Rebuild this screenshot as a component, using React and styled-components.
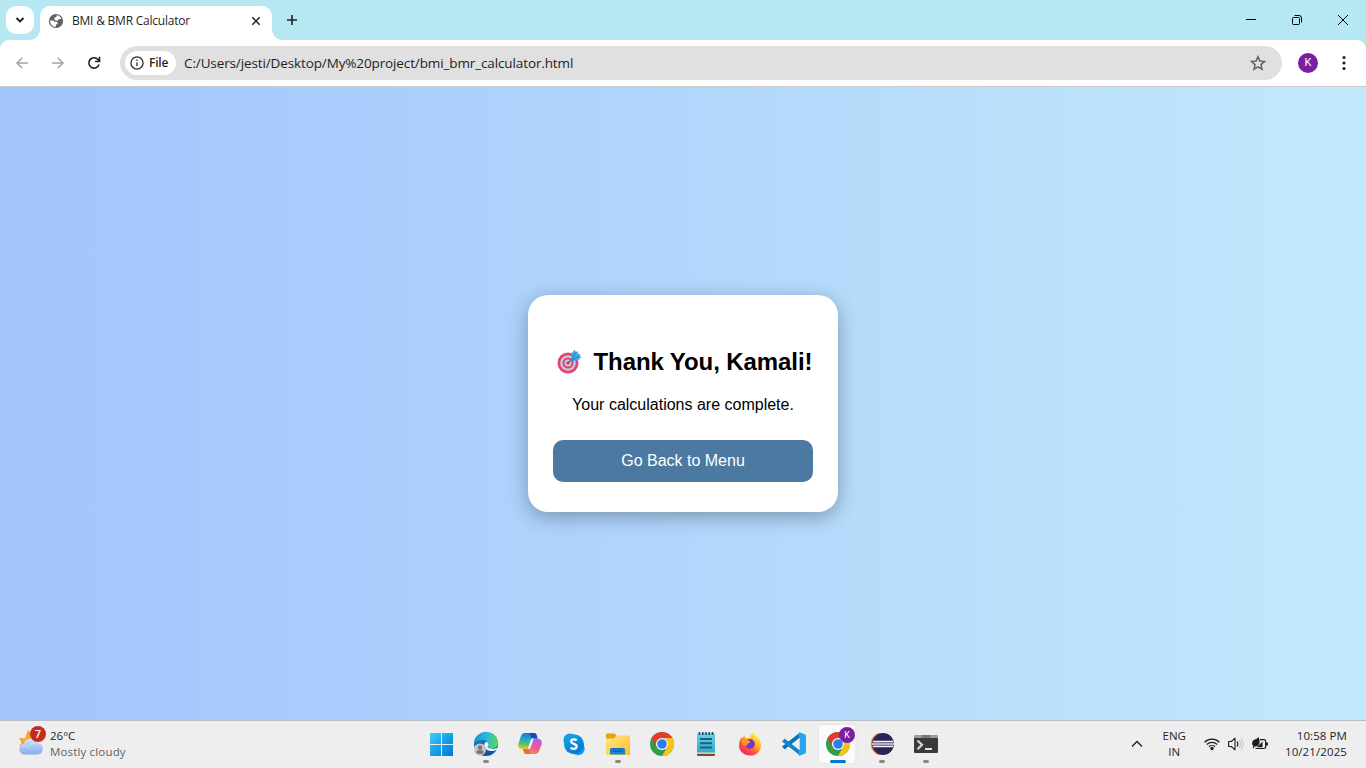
import React from "react";
import styled, { createGlobalStyle } from "styled-components";

const Global = createGlobalStyle`
  * { box-sizing: border-box; }
  body { margin: 0; overflow: hidden; }
`;

const ui = `"Open Sans", "Noto Sans", sans-serif`;

const Screen = styled.div`
  width: 1366px;
  height: 768px;
  display: flex;
  flex-direction: column;
  overflow: hidden;
  font-family: ${ui};
  color: #1f1f1f;
`;

const Text = styled.span`
  font-family: ${(p) => p.$font || ui};
  font-size: ${(p) => p.$size || 12}px;
  font-weight: ${(p) => p.$weight || 400};
  letter-spacing: ${(p) => p.$track || 0}px;
  line-height: ${(p) => p.$line || 16}px;
  color: ${(p) => p.$color || "#1f1f1f"};
  white-space: nowrap;
`;

const Svg = styled.svg`
  display: block;
  flex: none;
  overflow: visible;
`;

/* Browser chrome */
const TitleBar = styled.header`
  height: 40px;
  flex: none;
  display: flex;
  background: #b5e8f3;
`;

const TabSearch = styled.button`
  width: 28px;
  height: 28px;
  margin: 6px 6px 0;
  padding: 0;
  border: 0;
  border-radius: 10px;
  background: #fff;
  display: grid;
  place-items: center;
`;

const Tab = styled.div`
  position: relative;
  width: 232px;
  height: 34px;
  margin-top: 6px;
  padding: 0 9px 5px 8px;
  display: flex;
  align-items: center;
  background: #fff;
  border-radius: 10px 10px 0 0;
  &::before, &::after {
    content: "";
    position: absolute;
    bottom: 0;
    width: 10px;
    height: 10px;
  }
  &::before { left: -10px; background: radial-gradient(circle at 0 0, transparent 9.5px, #fff 10px); }
  &::after { right: -10px; background: radial-gradient(circle at 100% 0, transparent 9.5px, #fff 10px); }
`;

const TabTitle = styled(Text)`
  margin-left: 8px;
  flex: 1;
`;

const NewTab = styled.div`
  width: 40px;
  height: 40px;
  display: grid;
  place-items: center;
`;

const WindowButtons = styled.div`
  margin-left: auto;
  display: flex;
`;

const WindowButton = styled.div`
  width: 46px;
  height: 40px;
  display: grid;
  place-items: center;
`;

const ToolbarBack = styled.div`
  flex: none;
  height: 47px;
  background: #b5e8f3;
`;

const Toolbar = styled.div`
  height: 47px;
  display: flex;
  align-items: center;
  padding: 0 4px 1px;
  background: #fff;
  border-radius: 9px 9px 0 0;
  border-bottom: 1px solid #c9cbcd;
`;

const NavButton = styled.div`
  width: 36px;
  height: 34px;
  display: grid;
  place-items: center;
`;

const AddressBar = styled.div`
  width: 1162px;
  height: 34px;
  margin-left: 8px;
  padding: 0 15px 0 5px;
  display: flex;
  align-items: center;
  border-radius: 17px;
  background: #e0e0e0;
`;

const FileChip = styled.div`
  width: 51px;
  height: 24px;
  margin-right: 8px;
  padding-left: 5px;
  display: flex;
  align-items: center;
  gap: 5px;
  border-radius: 12px;
  background: #fff;
`;

const Url = styled(Text)`
  flex: 1;
`;

const Avatar = styled.div`
  width: ${(p) => p.$size}px;
  height: ${(p) => p.$size}px;
  border-radius: 50%;
  display: grid;
  place-items: center;
  background: #7b1fa2;
`;

const ProfileAvatar = styled(Avatar)`
  margin-left: 16px;
  margin-right: 16px;
`;

/* Page */
const Page = styled.main`
  flex: 1;
  display: flex;
  align-items: center;
  justify-content: center;
  background: linear-gradient(to right, #a1c4fd, #c2e9fb);
  font-family: "Liberation Sans", Arial, sans-serif;
`;

const Card = styled.section`
  width: 310px;
  height: 217px;
  padding: 30px 25px;
  border-radius: 20px;
  background: #fff;
  box-shadow: 0 5px 20px rgba(0, 0, 0, 0.3);
  text-align: center;
  color: #000;
`;

const Heading = styled.h2`
  height: 27px;
  margin: 23px 0 0;
  padding: 0 0 0 3.5px;
  display: flex;
  align-items: center;
  gap: 12px;
  font-size: 24px;
  line-height: 27px;
  letter-spacing: -0.09px;
  white-space: nowrap;
`;

const Message = styled.p`
  margin: 21px 0 0;
  font-size: 16px;
  line-height: 18px;
`;

const MenuButton = styled.button`
  width: 100%;
  height: 42px;
  margin-top: 26px;
  padding: 0;
  border: 0;
  border-radius: 10px;
  background: #4b79a1;
  color: #fff;
  font: 16px "Liberation Sans", Arial, sans-serif;
`;

/* Taskbar */
const Taskbar = styled.footer`
  height: 48px;
  flex: none;
  display: grid;
  grid-template-columns: 420px 528px 1fr;
  background: #eeeeee;
  border-top: 1px solid #b9bdc4;
`;

const Weather = styled.div`
  display: flex;
  align-items: center;
  padding: 0 0 2px 18px;
  gap: 4px;
`;

const WeatherIcon = styled.div`
  position: relative;
  width: 28px;
  height: 32px;
`;

const CountBadge = styled.div`
  position: absolute;
  left: 12px;
  top: -2px;
  width: 16px;
  height: 16px;
  border-radius: 50%;
  display: grid;
  place-items: center;
  background: #c42b1c;
`;

const Lines = styled.div`
  display: flex;
  flex-direction: column;
  align-items: ${(p) => p.$align || "flex-start"};
`;

const Apps = styled.nav`
  display: flex;
`;

const AppSlot = styled.div`
  position: relative;
  width: 44px;
  height: 47px;
  padding: 11px 0 0 10px;
`;

const ActivePlate = styled.div`
  position: absolute;
  left: 3px;
  top: 4px;
  width: 38px;
  height: 38px;
  border-radius: 4px;
  background: #fbfbfb;
  box-shadow: 0 0 0 1px #e6e6e6;
  border-right: 3px solid #f0f0f0;
`;

const AppArt = styled.div`
  position: relative;
  width: 24px;
  height: 24px;
`;

const Indicator = styled.div`
  position: absolute;
  left: ${(p) => (p.$active ? 14 : 19)}px;
  bottom: 5px;
  width: ${(p) => (p.$active ? 16 : 6)}px;
  height: 3px;
  border-radius: 2px;
  background: ${(p) => (p.$active ? "#0078d4" : "#8b8b8b")};
`;

const ProfileBadge = styled(Avatar)`
  position: absolute;
  left: 23px;
  top: 6px;
`;

const Tray = styled.div`
  display: flex;
  align-items: center;
  justify-content: flex-end;
  padding: 0 19px 2px 0;
`;

const Language = styled(Lines)`
  margin-left: 20px;
`;

const TrayIcons = styled.div`
  display: flex;
  align-items: center;
  gap: 8px;
  margin: 0 16px 0 18px;
`;

const Icon24 = ({ children }) => (
  <Svg width="24" height="24" viewBox="0 0 24 24">{children}</Svg>
);

const Line = ({ w, h = w, d, color = "#1f1f1f", width = 1.5, cap = "butt" }) => (
  <Svg width={w} height={h} viewBox={`0 0 ${w} ${h}`} fill="none" stroke={color} strokeWidth={width} strokeLinecap={cap}>
    <path d={d} />
  </Svg>
);

const Globe = () => (
  <Svg width="16" height="16" viewBox="0 0 16 16">
    <circle cx="8" cy="8" r="7.1" fill="#5f6368" />
    <path d="M8.800 2.200c2 .2 3.700 1.500 4.500 3.300l-.9.6-2 .2-.6 1.400-2.300-.3L6.200 6l.6-1.500 1.600-.5z" fill="#fff" />
    <path d="M2.100 7.400h2.700l2.200 1.300 2.400.3.300 1.600-1.500 1-.3 2.200C4.700 14 2.100 11 2.100 7.400z" fill="#fff" />
  </Svg>
);

const Target = () => (
  <Svg width="25" height="26" viewBox="0 0 25 26">
    <circle cx="11" cy="14" r="10.500" fill="#e0446f" />
    <circle cx="11" cy="14" r="7.800" fill="#cdc5da" />
    <circle cx="11" cy="14" r="5.500" fill="#dc4270" />
    <circle cx="11" cy="14" r="3.500" fill="#d4cbdc" />
    <circle cx="11" cy="14" r="1.700" fill="#c6396b" />
    <path d="M11 14l5-5" stroke="#795a94" strokeWidth="1.500" />
    <path d="M13.500 12.500L15 3.500 18 .5l.8 2.700 2-1.200.5 3 2.200.3-.8 2L24.500 8l-3.500 3.500z" fill="#46a9ea" />
    <path d="M14.500 11.500l4-8M15 11.500l7-4.500" stroke="#2078cf" strokeWidth="1" />
  </Svg>
);

const WeatherArt = () => (
  <Svg width="28" height="32" viewBox="0 0 28 32">
    <defs>
      <linearGradient id="cloud" x1="0" y1="0" x2="0" y2="1">
        <stop offset="0" stopColor="#d4e5fc" /><stop offset=".5" stopColor="#a9c8f5" /><stop offset="1" stopColor="#87aeeb" />
      </linearGradient>
    </defs>
    <path d="M10 2l2.500 3 4-1-1 12-8 3-3.500-1.500-2.500.5 2-3.500L1 10l6 .5z" fill="#f5a623" />
    <path d="M6 26.500a5.500 5.500 0 0 1-.5-10.800 7.500 7.500 0 0 1 14-.7A5.800 5.800 0 0 1 20 26.500z" fill="url(#cloud)" />
    <path d="M3 18.500c4-2 7 .5 9 3M11 17c4-3 7-2 9 1" stroke="#dceafd" strokeWidth="1" opacity=".6" fill="none" />
  </Svg>
);

const StartArt = () => (
  <Icon24>
    <defs>
      <linearGradient id="win" gradientUnits="userSpaceOnUse" x1="0" y1="1" x2="23" y2="24">
        <stop offset="0" stopColor="#48cdf9" /><stop offset=".5" stopColor="#15a2e8" /><stop offset="1" stopColor="#0078d4" />
      </linearGradient>
    </defs>
    <path d="M0 1h11v11H0zM12 1h11v11H12zM0 13h11v11H0zM12 13h11v11H12z" fill="url(#win)" />
  </Icon24>
);

const EdgeArt = () => (
  <Icon24>
    <defs>
      <linearGradient id="edgeTop" x1="0" y1=".4" x2="1" y2=".5">
        <stop offset="0" stopColor="#1793db" /><stop offset=".5" stopColor="#25bdd5" /><stop offset="1" stopColor="#5bd657" />
      </linearGradient>
      <linearGradient id="edgeLow" x1="0" y1="0" x2="0" y2="1">
        <stop offset="0" stopColor="#1b8fd8" /><stop offset="1" stopColor="#124c91" />
      </linearGradient>
    </defs>
    <circle cx="12" cy="12" r="12" fill="url(#edgeLow)" />
    <path d="M0 11.500C.5 5 5.500 0 12 0c7 0 12 5 12 10.500 0 4-3 6.200-6.500 6.200-2.500 0-3.800-1-3.800-1.900 0-.7 1-1.100 1-2.800 0-2.300-2.500-4-6-4C4.500 8 1.500 9.500 0 11.500z" fill="url(#edgeTop)" />
    <path d="M12.500 9.800c-1.900.5-2.500 2.600-1.900 4.600 1 3.300 4.500 5 8.100 4.600 2-.2 3.600-.9 4.600-2l-.9-1c-2 1.200-4.200 1-5.900.6-2.300-.4-3.800-1.500-2.400-2.900 1-1.200.6-3.400-1.600-3.900z" fill="#eefaff" />
    <circle cx="6" cy="17.500" r="6" fill="#c9c6c4" />
    <circle cx="6" cy="15.500" r="2.300" fill="#7b7876" />
    <path d="M2.300 20.700c0-2 1.200-2.700 3.700-2.700s3.700.7 3.700 2.700C8 22.400 4 22.400 2.300 20.700z" fill="#7b7876" />
  </Icon24>
);

const CopilotArt = () => (
  <Icon24>
    <defs>
      <linearGradient id="coA" x1=".4" y1="0" x2=".3" y2="1">
        <stop offset="0" stopColor="#1779df" /><stop offset=".4" stopColor="#1aafc7" /><stop offset=".7" stopColor="#67bd5c" /><stop offset="1" stopColor="#f4cf25" />
      </linearGradient>
      <linearGradient id="coB" x1=".6" y1="0" x2=".3" y2="1">
        <stop offset="0" stopColor="#b85af0" /><stop offset=".5" stopColor="#ee5797" /><stop offset="1" stopColor="#fb913d" />
      </linearGradient>
    </defs>
    <path d="M7 1h9c1.700 0 2.300 1 2.800 2.800l.8 2.600H16c-1.700 0-2.600.7-3.100 2.300l-2 6.500c-.5 1.600-1.300 2-2.700 2H4.500C1 17.200-.5 15 .5 11.500l2.300-7C3.500 2.200 4.800 1 7 1z" fill="url(#coA)" />
    <path d="M11 1h5c1.700 0 2.300 1 2.800 2.800l.8 2.600H16c-2.500 0-3-.5-3.500-2.200C12.100 2.600 11.800 1.500 11 1z" fill="#1849c4" />
    <path d="M17 22H8.700C7 22 6.300 21 5.800 19.400L5 17h3c1.700 0 2.600-.7 3.100-2.300l2-6c.5-1.600 1.300-2 2.700-2h3.700c3.500 0 5 2.300 4 5.800l-2.300 6.200C20.500 20.800 19.200 22 17 22z" fill="url(#coB)" />
    <path d="M8.700 22C7 22 6.300 21 5.800 19.400L5 17h3c2 0 3 .8 3.500 2.300.4 1.400.3 2.200 1.200 2.700z" fill="#ed6940" />
    <path d="M12.600 8.500c.5-1.600 1.300-2 3.100-2l-3 9c-.5 1.400-1.500 1.800-3 1.700z" fill="#eef4fa" />
  </Icon24>
);

const SkypeArt = () => (
  <Icon24>
    <defs><linearGradient id="sky" x1="0" y1="0" x2=".6" y2="1"><stop stopColor="#1ba9e8" /><stop offset="1" stopColor="#0079d3" /></linearGradient></defs>
    <circle cx="8" cy="8" r="6.600" fill="#149de0" /><circle cx="16.200" cy="16.700" r="6.500" fill="#149fe2" />
    <circle cx="12" cy="12.300" r="10" fill="url(#sky)" />
    <path d="M14.600 8.400C13.900 7.700 13 7.400 11.900 7.400c-1.600 0-2.700.8-2.700 2.100 0 3 5.500 1.800 5.500 4.800 0 1.600-1.200 2.500-3.100 2.500-1.300 0-2.300-.4-3-1.100" fill="none" stroke="#fff" strokeWidth="2.200" />
  </Icon24>
);

const FolderArt = () => (
  <Icon24>
    <defs>
      <linearGradient id="fold" x1="0" y1="0" x2="1" y2="1"><stop stopColor="#ffe78d" /><stop offset="1" stopColor="#fcbf27" /></linearGradient>
      <linearGradient id="tray" x1="0" y1="0" x2="0" y2="1"><stop stopColor="#0f71c8" /><stop offset="1" stopColor="#198bd8" /></linearGradient>
    </defs>
    <path d="M0 3c0-1 .5-1.500 1.500-1.500H8.500L10.500 3.500V10H0z" fill="#dea412" />
    <path d="M0 6.500h8L10.500 3.500H22.500c1 0 1.500.5 1.500 1.500v16.500c0 1-.5 1.500-1.500 1.500h-21C.5 23 0 22.500 0 21.500z" fill="url(#fold)" />
    <path d="M4 22.500v-4.500c0-1.300.8-2.100 2-2.100h11c1.200 0 2 .8 2 2.100v4.500z" fill="url(#tray)" />
    <path d="M7 19.500h9" stroke="#0c59a4" />
  </Icon24>
);

const ChromeArt = () => (
  <Icon24>
    <circle cx="12" cy="12" r="12" fill="#2f9e4c" />
    <path d="M1.600 6A12 12 0 0 1 22.400 6H12a6 6 0 0 0-5.200 9z" fill="#e53b2f" />
    <path d="M22.400 6A12 12 0 0 1 12 24l5.200-9A6 6 0 0 0 12 6z" fill="#fbc116" />
    <circle cx="12" cy="12" r="6" fill="#fff" /><circle cx="12" cy="12" r="4.800" fill="#3179ed" />
  </Icon24>
);

const NotepadArt = () => (
  <Icon24>
    <defs><linearGradient id="pad" x1="0" y1="0" x2="0" y2="1"><stop stopColor="#70d1e5" /><stop offset="1" stopColor="#2da8ce" /></linearGradient></defs>
    <path d="M3 2.500C3 1.500 3.500 1 4.500 1h15c1 0 1.500.5 1.500 1.500V21H3z" fill="url(#pad)" />
    <path d="M5.500 0v3M8.800 0v3M12 0v3M15.300 0v3M18.500 0v3" stroke="#174f69" strokeWidth="1.500" />
    <path d="M6 7h12M6 11.300h12M6 15.500h12" stroke="#16657e" strokeWidth="1.900" />
    <path d="M3 20.500h18v1.300H3z" fill="#e9e9e8" /><path d="M3 21.800h18v1.100q0 1.100-1 1.100H4q-1 0-1-1z" fill="#93470e" />
  </Icon24>
);

const FirefoxArt = () => (
  <Icon24>
    <defs>
      <linearGradient id="fire" x1=".8" y1=".1" x2=".2" y2="1"><stop stopColor="#fff23d" /><stop offset=".35" stopColor="#ffb52a" /><stop offset=".62" stopColor="#ff5a35" /><stop offset="1" stopColor="#ed1b7b" /></linearGradient>
      <radialGradient id="fox"><stop stopColor="#6542d6" /><stop offset=".7" stopColor="#7335c7" /><stop offset="1" stopColor="#b32ba1" /></radialGradient>
    </defs>
    <path d="M3.500 5l1.200 1c.5-1 1.100-1.700 2-2.400l.6 2.400 5-.2c-.2-2.800 1.400-4.800 3.300-5.800.4 2 1.200 3 2.500 4.300.5.400 1 .8 1.300 1.400l.6-.5c1.900 2.400 3 5.200 3 8.200C23 19.500 18 23.500 12 23.500S1 19.500 1 13.300C1 10 2.300 7.500 3.500 5z" fill="url(#fire)" />
    <circle cx="12" cy="12" r="4.900" fill="url(#fox)" />
    <path d="M3.500 9c3-1.500 5-1.700 7.500-.2 1.600.8 1.600 2-.7 2.700-1 .4-1.300 1.200-1.700 2.300L5 13z" fill="#ff9a26" />
  </Icon24>
);

const CodeArt = () => (
  <Icon24>
    <path d="M1.300 16L18 3" stroke="#0b73b8" strokeWidth="4" />
    <path d="M1.300 8L18 21" stroke="#1482c9" strokeWidth="4" />
    <path d="M17.500.3l5 2c1 .4 1.500 1 1.500 2v15.400c0 1-.5 1.600-1.500 2l-5 2c-.8-.4-1-.8-1-1.700l1.200-4V6l-1.200-4c0-.8.200-1.300 1-1.700z" fill="#29a6ee" />
  </Icon24>
);

const EclipseArt = () => (
  <Icon24>
    <path d="M9.500.8a11.500 11.500 0 0 0 0 22.400L13 12z" fill="#f59320" /><circle cx="13" cy="12" r="11" fill="#2c2255" />
    <path d="M3 9.500h20.300M2 12h22M3 14.500h20.300" stroke="#f4f2f6" strokeWidth="1.400" />
    <path d="M2.300 10.750h21.400M2.300 13.250h21.400" stroke="#8d84ac" strokeWidth="1" />
  </Icon24>
);

const TerminalArt = () => (
  <Icon24>
    <path d="M1 3h22q1 0 1 1v3H0V4q0-1 1-1z" fill="#9b9b9b" /><path d="M8 3h8v4H8z" fill="#777" />
    <path d="M0 6h24v14q0 1-1 1H1q-1 0-1-1z" fill="#3a3a3a" />
    <path d="M3.500 8.500L8 12.800l-4.500 4.400" stroke="#d9d9d9" strokeWidth="2.200" fill="none" /><path d="M11 17h7" stroke="#fff" strokeWidth="1.700" />
  </Icon24>
);

const WifiIcon = () => (
  <Svg width="16" height="14" viewBox="0 0 16 14" fill="none" stroke="#1c1c1c" strokeWidth="1.200">
    <path d="M.6 5.200a10.500 10.500 0 0 1 14.800 0M2.800 7.500a7.400 7.400 0 0 1 10.400 0M5 9.700a4.300 4.300 0 0 1 6 0" />
    <circle cx="8" cy="11.500" r="1.100" fill="#1c1c1c" />
  </Svg>
);

const SpeakerIcon = () => (
  <Svg width="16" height="14" viewBox="0 0 16 14" fill="none" stroke="#1c1c1c" strokeWidth="1.100">
    <path d="M.6 4.500h2.700L7 1.200v11.600L3.300 9.500H.6z" strokeLinejoin="round" /><path d="M9 4.500q1.700 2.500 0 5" />
    <path d="M11 2.900q3 4.100 0 8.200M13 1.200q4 5.800 0 11.600" stroke="#c4c4c4" />
  </Svg>
);

const BatteryIcon = () => (
  <Svg width="17" height="14" viewBox="0 0 17 14">
    <path d="M8 2.600H12q1.700 0 1.700 1.700v5.500q0 1.700-1.700 1.700H3.500" fill="none" stroke="#1c1c1c" strokeWidth="1.200" />
    <path d="M14 5.500h1.900v3H14zM5 10.300L10.500 4.500v5.800z" fill="#1c1c1c" />
    <path d="M6.500 0C7.900 3 8.300 6.300 6.500 8.200 5 9.600 3.500 9.700 2.500 9.400L1.500 11.500l-.9-.4.8-2C-.7 7 .1 3.200 2.900 2.400 4.900 1.900 5.800 1.200 6.500 0z" fill="#1c1c1c" />
  </Svg>
);

const apps = [
  { id: "start", Art: StartArt },
  { id: "edge", Art: EdgeArt, open: true },
  { id: "copilot", Art: CopilotArt },
  { id: "skype", Art: SkypeArt },
  { id: "files", Art: FolderArt, open: true },
  { id: "chrome", Art: ChromeArt },
  { id: "notepad", Art: NotepadArt },
  { id: "firefox", Art: FirefoxArt },
  { id: "code", Art: CodeArt },
  { id: "chrome-profile", Art: ChromeArt, active: true },
  { id: "eclipse", Art: EclipseArt, open: true },
  { id: "terminal", Art: TerminalArt, open: true },
];

export default function App() {
  return (
    <Screen>
      <Global />
      <TitleBar>
        <TabSearch><Line w={10} h={6} d="M1.500 1L5 4.500 8.500 1" width={1.800} /></TabSearch>
        <Tab>
          <Globe />
          <TabTitle $track={-0.22}>BMI &amp; BMR Calculator</TabTitle>
          <Line w={14} d="M3.300 3.300l7.400 7.400M10.700 3.300l-7.400 7.400" width={1.500} />
        </Tab>
        <NewTab><Line w={12} d="M6 1v10M1 6h10" width={1.600} /></NewTab>
        <WindowButtons>
          <WindowButton><Line w={10} d="M0 4.500h10" width={1} color="#000" /></WindowButton>
          <WindowButton>
            <Svg width="10" height="10" viewBox="0 0 10 10" fill="none" stroke="#000" strokeWidth="1">
              <rect x=".5" y="2.500" width="7" height="7" rx="1" /><path d="M2.500.5H7a2.500 2.500 0 0 1 2.500 2.500v4.500" />
            </Svg>
          </WindowButton>
          <WindowButton><Line w={10} d="M0 0l10 10M10 0L0 10" width={1} color="#000" /></WindowButton>
        </WindowButtons>
      </TitleBar>
      <ToolbarBack>
        <Toolbar>
          <NavButton><Line w={12} d="M12 6H1.300M6.300 .7L1 6l5.300 5.300" color="#a3a3a3" /></NavButton>
          <NavButton><Line w={12} d="M0 6h10.700M5.700 .7L11 6l-5.300 5.300" color="#a3a3a3" /></NavButton>
          <NavButton><Line w={14} d="M12 8.500A5.200 5.200 0 1 1 11 3.500L12.500 5.200M12.500 .8v4.700H8" width={1.600} /></NavButton>
          <AddressBar>
            <FileChip>
              <Svg width="14" height="14" viewBox="0 0 14 14" fill="none" stroke="#303030" strokeWidth="1.300">
                <circle cx="7" cy="7" r="6.100" /><path d="M7 6.200v4M7 3.500v1.400" />
              </Svg>
              <Text $weight={600} $track={-0.2}>File</Text>
            </FileChip>
            <Url $size={13.5} $track={-0.12}>C:/Users/jesti/Desktop/My%20project/bmi_bmr_calculator.html</Url>
            <Svg width="18" height="18" viewBox="0 0 18 18" fill="none" stroke="#606367" strokeWidth="1.500">
              <path d="M9 2.800l1.800 4.300 4.700.4-3.600 3.100 1.100 4.600L9 12.800l-4 2.400 1.100-4.600-3.600-3.100 4.700-.4z" />
            </Svg>
          </AddressBar>
          <ProfileAvatar $size={20}><Text $size={11} $color="#fff" $font="Roboto, sans-serif">K</Text></ProfileAvatar>
          <Svg width="20" height="16" viewBox="0 0 20 16" fill="#1f1f1f">
            <circle cx="10" cy="2.500" r="1.600" /><circle cx="10" cy="8" r="1.600" /><circle cx="10" cy="13.500" r="1.600" />
          </Svg>
        </Toolbar>
      </ToolbarBack>
      <Page>
        <Card>
          <Heading><Target />Thank You, Kamali!</Heading>
          <Message>Your calculations are complete.</Message>
          <MenuButton>Go Back to Menu</MenuButton>
        </Card>
      </Page>
      <Taskbar>
        <Weather>
          <WeatherIcon><WeatherArt /><CountBadge><Text $size={11} $weight={600} $color="#fff">7</Text></CountBadge></WeatherIcon>
          <Lines>
            <Text $size={11.5}>26°C</Text>
            <Text $size={11.5} $track={0.16} $color="#5f5f5f">Mostly cloudy</Text>
          </Lines>
        </Weather>
        <Apps>
          {apps.map(({ id, Art, open, active }) => (
            <AppSlot key={id}>
              {active && <ActivePlate />}
              <AppArt><Art /></AppArt>
              {active && <ProfileBadge $size={16}><Text $size={9} $color="#fff" $font="Roboto, sans-serif">K</Text></ProfileBadge>}
              {(open || active) && <Indicator $active={active} />}
            </AppSlot>
          ))}
        </Apps>
        <Tray>
          <Line w={12} h={8} d="M1 6.500l5-5 5 5" width={1.300} />
          <Language $align="center">
            <Text $size={11.5}>ENG</Text>
            <Text $size={11.5}>IN</Text>
          </Language>
          <TrayIcons><WifiIcon /><SpeakerIcon /><BatteryIcon /></TrayIcons>
          <Lines $align="flex-end">
            <Text $size={11.5} $track={0.08}>10:58 PM</Text>
            <Text $size={11.5} $track={0.1}>10/21/2025</Text>
          </Lines>
        </Tray>
      </Taskbar>
    </Screen>
  );
}
